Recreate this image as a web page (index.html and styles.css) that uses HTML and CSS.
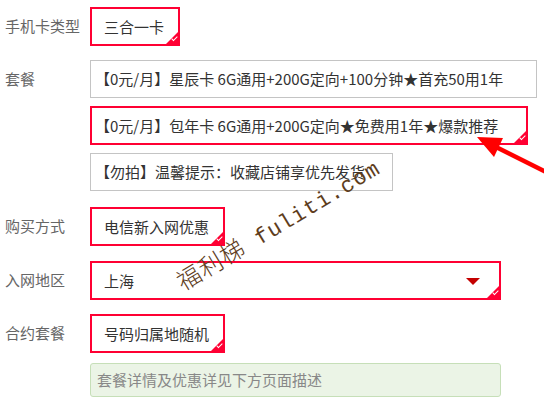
FILE: index.html
```html
<!DOCTYPE html>
<html lang="zh-CN">
<head>
  <meta charset="UTF-8" />
  <title>套餐选择</title>
  <link rel="stylesheet" href="styles.css">
</head>
<body>
  <div id="form">
    <div class="row r1">
      <div class="label">手机卡类型</div>
      <div class="opts">
        <div class="opt on">三合一卡</div>
      </div>
    </div>

    <div class="row r2">
      <div class="label">套餐</div>
      <div class="opts col">
        <div class="opt wide plan-a">【0元/月】星辰卡 6G通用+200G定向+100分钟★首充50用1年</div>
        <div class="opt wide on plan-b">【0元/月】包年卡 6G通用+200G定向★免费用1年★爆款推荐</div>
        <div class="opt wide plan-c">【勿拍】温馨提示：收藏店铺享优先发货</div>
      </div>
    </div>

    <div class="row r3">
      <div class="label">购买方式</div>
      <div class="opts">
        <div class="opt on">电信新入网优惠</div>
      </div>
    </div>

    <div class="row r4">
      <div class="label">入网地区</div>
      <div class="opts">
        <div class="opt on select">上海<span class="caret"></span></div>
      </div>
    </div>

    <div class="row r5">
      <div class="label">合约套餐</div>
      <div class="opts">
        <div class="opt on">号码归属地随机</div>
      </div>
    </div>

    <div class="row r6">
      <div class="label"></div>
      <div class="note">套餐详情及优惠详见下方页面描述</div>
    </div>
  </div>

  <!-- overlays -->
  <div class="watermark"><span class="cjk">福利梯</span> fuliti.com</div>
  <svg class="arrow" width="544" height="402" viewBox="0 0 544 402">
    <line x1="552" y1="175" x2="494" y2="146" stroke="#f00" stroke-width="4.5" />
    <polygon points="477,137 503,138 494,157" fill="#f00" />
  </svg>
</body>
</html>
```

FILE: styles.css
```css
:root {
  --red: #ff0033;
  --text: #333;
  --label: #666;
}
body {
  margin: 0;
  background: #fff;
  font-family: "Noto Sans CJK SC", "Noto Sans", sans-serif;
  font-size: 15px;
  color: var(--text);
  position: relative;
  width: 544px;
  height: 402px;
  overflow: hidden;
}
#form {
  padding: 7px 0 0 5px;
}
.row {
  display: flex;
  align-items: flex-start;
}
.label {
  width: 85px;
  flex: none;
  line-height: 38px;
  color: var(--label);
}
.opts {
  display: flex;
}
.opts.col {
  flex-direction: column;
  align-items: flex-start;
  gap: 8px;
}
.r1 { margin-bottom: 14px; }
.r2 { margin-bottom: 16px; }
.r3 { margin-bottom: 15px; }
.r4 { margin-bottom: 14px; }
.r5 { margin-bottom: 10px; }

.opt {
  position: relative;
  box-sizing: border-box;
  height: 38px;
  padding: 0 14px 0 12px;
  border: 1px solid #c4c4c4;
  line-height: 36px;
  white-space: nowrap;
}
.opt.wide {
  padding: 0 14px 0 4px;
}
.opt.on {
  height: 39px;
  border: 2px solid var(--red);
  line-height: 35px;
}
.opt.wide.on {
  padding: 0 8px 0 3px;
}
.plan-a { width: 447px; }
.plan-b { width: 438px; }
.plan-c { width: 303px; }

.opt.on::after {
  content: "";
  position: absolute;
  right: 0;
  bottom: 0;
  width: 12px;
  height: 12px;
  background: var(--red);
  clip-path: polygon(100% 0, 100% 100%, 0 100%);
}
.opt.on::before {
  content: "";
  position: absolute;
  right: 2px;
  bottom: 3px;
  width: 2px;
  height: 5px;
  border-right: 1.5px solid #fff;
  border-bottom: 1.5px solid #fff;
  transform: rotate(45deg);
  z-index: 1;
}
.select {
  width: 411px;
}
.caret {
  position: absolute;
  right: 19px;
  top: 15px;
  width: 0;
  height: 0;
  border-left: 7px solid transparent;
  border-right: 7px solid transparent;
  border-top: 7px solid #c40000;
}
.note {
  box-sizing: border-box;
  width: 411px;
  height: 34px;
  line-height: 32px;
  padding: 0 6px;
  background: #ebf4e6;
  border: 1px solid #c6dfb8;
  border-radius: 3px;
  color: #888;
}

.watermark {
  position: absolute;
  left: 188px;
  top: 266px;
  transform-origin: left bottom;
  transform: rotate(-31deg);
  font-family: "Liberation Mono", "Noto Sans CJK SC", monospace;
  font-size: 22px;
  letter-spacing: 1px;
  color: #5e3d1c;
  white-space: nowrap;
  line-height: 28px;
}
.watermark .cjk {
  font-family: "Noto Sans CJK SC", sans-serif;
  font-size: 24px;
  font-weight: 300;
}
.arrow {
  position: absolute;
  left: 0;
  top: 0;
  pointer-events: none;
}
```
